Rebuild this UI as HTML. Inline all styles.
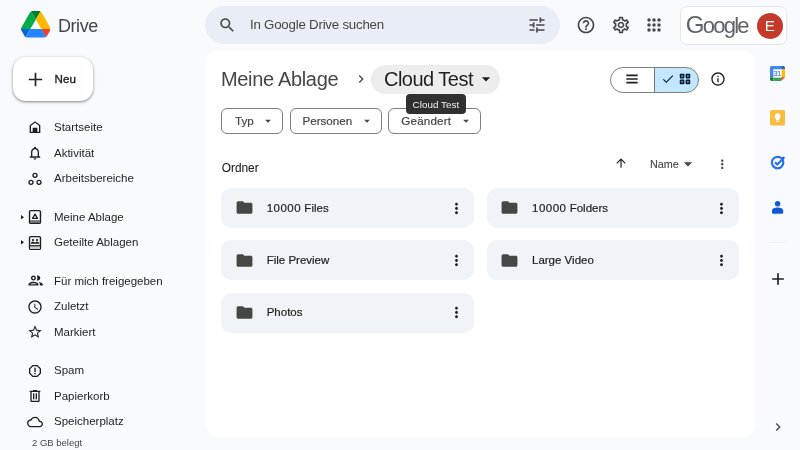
<!DOCTYPE html>
<html lang="de">
<head>
<meta charset="utf-8">
<title>Cloud Test – Google Drive</title>
<style>
*{box-sizing:border-box;margin:0;padding:0}
html,body{width:800px;height:450px;overflow:hidden}
body{background:#f8fafd;font-family:"Liberation Sans",sans-serif;color:#1f1f1f;position:relative;-webkit-font-smoothing:antialiased}
.abs{position:absolute}
svg{display:block}
.ico{position:absolute;width:16px;height:16px;fill:#444746}
.t{position:absolute;white-space:nowrap;line-height:1}
/* sidebar */
.nav{font-size:11.500px;color:#1f1f1f;left:54px}
.nico{left:27.200px;width:16px;height:16px;fill:#1f1f1f}
/* header */
#search{left:205px;top:6px;width:355px;height:38px;border-radius:19px;background:#e9eef6}
#acct{left:680px;top:6px;width:107px;height:38.600px;border-radius:7px;background:#fff;border:1px solid #e4e6e9}
#avatar{left:756.800px;top:12.600px;width:26px;height:26px;border-radius:50%;background:#c5392a;color:#fff;font-size:15px;text-align:center;line-height:26px}
/* main */
#main{left:205.500px;top:50px;width:549.800px;height:387px;border-radius:13px;background:#fff}
.chip{position:absolute;top:108px;height:25.700px;border:1px solid #7d807e;border-radius:6px;background:#fff}
.chip .t{top:6.200px;font-size:11.6px;color:#444746;-webkit-text-stroke:0.2px #444746}
.chip .ico{width:14px;height:14px;margin-left:1px}
.card{position:absolute;width:253px;height:39.800px;border-radius:10px;background:#f0f4f9}
.card .t{left:45.700px;top:14.500px;font-size:11.5px;color:#1f1f1f;-webkit-text-stroke:0.2px #1f1f1f}
.card .t span{letter-spacing:0.5px}
.card.r{width:251.800px}
.card.r .fold{left:13.400px}
.card.r .t{left:45px}
.card.r .more{left:225.900px}
.card .fold{left:13.700px;top:10.300px;width:19px;height:19px;fill:#444746}
.card .more{left:226.500px;top:11.700px;width:17px;height:17px;fill:#1f1f1f}
</style>
</head>
<body>
<div id="root" style="position:absolute;left:0;top:0;width:800px;height:450px;will-change:transform">

<!-- ===== logo ===== -->
<svg class="abs" style="left:20.500px;top:11.300px;width:29.600px;height:26.500px" viewBox="0 0 87.3 78">
<path d="m6.6 66.85 3.85 6.65c.8 1.4 1.95 2.5 3.3 3.3l13.750-23.800h-27.500c0 1.550.4 3.100 1.200 4.500z" fill="#0066da"/>
<path d="m43.650 25-13.750-23.800c-1.350.8-2.500 1.900-3.300 3.300l-25.400 44a9.060 9.060 0 0 0 -1.200 4.500h27.500z" fill="#00ac47"/>
<path d="m73.550 76.800c1.350-.8 2.500-1.900 3.300-3.300l1.600-2.750 7.650-13.250c.8-1.400 1.200-2.950 1.200-4.500h-27.502l5.852 11.500z" fill="#ea4335"/>
<path d="m43.650 25 13.750-23.800c-1.350-.8-2.900-1.200-4.500-1.200h-18.500c-1.600 0-3.150.45-4.500 1.200z" fill="#00832d"/>
<path d="m59.800 53h-32.300l-13.750 23.800c1.350.8 2.900 1.200 4.500 1.200h50.800c1.600 0 3.150-.45 4.500-1.200z" fill="#2684fc"/>
<path d="m73.400 26.500-12.700-22c-.8-1.400-1.950-2.500-3.300-3.300l-13.750 23.800 16.150 28h27.450c0-1.550-.4-3.100-1.200-4.500z" fill="#ffba00"/>
</svg>
<div class="t" style="left:58px;top:16.500px;font-size:18px;color:#444746;letter-spacing:-0.45px">Drive</div>

<!-- ===== new button ===== -->
<div class="abs" style="left:13px;top:57px;width:80px;height:44px;border-radius:13px;background:#fff;box-shadow:0 1px 2px rgba(0,0,0,.3),0 1px 3px 1px rgba(0,0,0,.15)"></div>
<svg class="ico" style="left:23.500px;top:67.750px;width:23px;height:23px;fill:#1f1f1f" viewBox="0 0 24 24"><path d="M19 12.850h-6.150V19h-1.700v-6.150H5v-1.700h6.150V5h1.700v6.150H19z"/></svg>
<div class="t" style="left:54.600px;top:73.300px;font-size:11.6px;color:#1f1f1f;-webkit-text-stroke:0.35px #1f1f1f">Neu</div>

<!-- ===== sidebar nav ===== -->
<!-- Startseite -->
<svg class="ico nico" style="top:119.3px" viewBox="0 0 24 24"><path d="M12 3.200L4 9.200V21h16V9.200l-8-6zM18 19h-2.500v-6h-7v6H6v-8.800l6-4.500 6 4.500V19z"/><rect x="9.500" y="14" width="5" height="5.500"/></svg>
<div class="t nav" style="top:121.9px">Startseite</div>
<!-- Aktivität -->
<svg class="ico nico" style="top:144.9px" viewBox="0 0 24 24"><path d="M12 22c1.100 0 2-.9 2-2h-4c0 1.100.9 2 2 2zm6-6v-5c0-3.070-1.630-5.640-4.500-6.320V4c0-.83-.67-1.500-1.500-1.500s-1.500.67-1.500 1.500v.68C7.640 5.360 6 7.920 6 11v5l-2 2v1h16v-1l-2-2zm-2 1H8v-6c0-2.480 1.510-4.500 4-4.500s4 2.020 4 4.500v6z"/></svg>
<div class="t nav" style="top:147.5px">Aktivität</div>
<!-- Arbeitsbereiche -->
<svg class="ico nico" style="top:170.5px" viewBox="0 0 24 24"><g fill="none" stroke="#1f1f1f" stroke-width="2"><circle cx="12" cy="6.500" r="3"/><circle cx="6" cy="17" r="3"/><circle cx="18" cy="17" r="3"/></g></svg>
<div class="t nav" style="top:173.1px">Arbeitsbereiche</div>
<!-- Meine Ablage -->
<svg class="abs" style="left:21px;top:214.800px;width:3px;height:4.400px" viewBox="0 0 4 6" preserveAspectRatio="none"><path d="M0 0l4 3-4 3z" fill="#1f1f1f"/></svg>
<svg class="ico nico" style="top:208.9px" viewBox="0 0 24 24"><rect x="3.800" y="2.400" width="16.400" height="19.200" rx="1.900" fill="none" stroke="#1f1f1f" stroke-width="2.100"/><rect x="4.600" y="16.800" width="14.800" height="4.200" fill="#707070"/><path d="M12 7.700L15.700 14H8.300Z" fill="none" stroke="#1f1f1f" stroke-width="2" stroke-linejoin="round"/></svg>
<div class="t nav" style="top:211.5px">Meine Ablage</div>
<!-- Geteilte Ablagen -->
<svg class="abs" style="left:21px;top:240.400px;width:3px;height:4.400px" viewBox="0 0 4 6" preserveAspectRatio="none"><path d="M0 0l4 3-4 3z" fill="#1f1f1f"/></svg>
<svg class="ico nico" style="top:234.5px" viewBox="0 0 24 24"><rect x="3.800" y="2.400" width="16.400" height="19.200" rx="1.900" fill="none" stroke="#1f1f1f" stroke-width="2.100"/><rect x="4.600" y="16.600" width="14.800" height="4.400" fill="#c9c9c9"/><rect x="3.800" y="15.200" width="16.400" height="1.800" fill="#1f1f1f"/><circle cx="9" cy="7.600" r="1.700"/><circle cx="15" cy="7.600" r="1.700"/><path d="M5.800 13.200v-.9c0-1.400 2-2.100 3.200-2.100 1 0 2.400.5 3 1.300.6-.8 2-1.300 3-1.300 1.200 0 3.200.7 3.200 2.100v.9H5.800z"/></svg>
<div class="t nav" style="top:237.1px">Geteilte Ablagen</div>
<!-- Für mich freigegeben -->
<svg class="ico nico" style="top:272.200px;left:26.700px;width:17.200px;height:17.200px" viewBox="0 0 24 24"><path d="M9 13.750c-2.340 0-7 1.170-7 3.500V19h14v-1.750c0-2.330-4.660-3.500-7-3.500zM4.340 17c.84-.58 2.870-1.250 4.660-1.250s3.820.67 4.660 1.250H4.340zM9 12c1.930 0 3.500-1.570 3.500-3.500S10.930 5 9 5 5.500 6.570 5.500 8.500 7.070 12 9 12zm0-5c.83 0 1.500.67 1.500 1.500S9.830 10 9 10s-1.500-.67-1.500-1.500S8.170 7 9 7zm7.040 6.810c1.160.84 1.960 1.960 1.960 3.440V19h4v-1.750c0-2.020-3.500-3.170-5.960-3.440zM15 12c1.930 0 3.500-1.570 3.500-3.500S16.930 5 15 5c-.54 0-1.040.13-1.500.35.630.89 1 1.980 1 3.150s-.37 2.260-1 3.150c.46.220.96.350 1.500.350z"/></svg>
<div class="t nav" style="top:275.5px">Für mich freigegeben</div>
<!-- Zuletzt -->
<svg class="ico nico" style="top:298.5px" viewBox="0 0 24 24"><path d="M11.990 2C6.470 2 2 6.480 2 12s4.470 10 9.990 10C17.520 22 22 17.520 22 12S17.520 2 11.990 2zM12 20c-4.420 0-8-3.580-8-8s3.580-8 8-8 8 3.580 8 8-3.580 8-8 8zm.5-13H11v6l5.250 3.150.75-1.230-4.500-2.670z"/></svg>
<div class="t nav" style="top:301.1px">Zuletzt</div>
<!-- Markiert -->
<svg class="ico nico" style="top:324.1px" viewBox="0 0 24 24"><path d="M22 9.240l-7.190-.62L12 2 9.190 8.630 2 9.240l5.460 4.730L5.820 21 12 17.270 18.180 21l-1.630-7.030L22 9.240zM12 15.400l-3.760 2.270 1-4.280-3.320-2.880 4.380-.38L12 6.100l1.710 4.040 4.380.38-3.320 2.880 1 4.280L12 15.400z"/></svg>
<div class="t nav" style="top:326.7px">Markiert</div>
<!-- Spam -->
<svg class="ico nico" style="top:362.5px" viewBox="0 0 24 24"><path d="M15.730 3H8.270L3 8.270v7.460L8.270 21h7.460L21 15.730V8.270L15.730 3zM19 14.900L14.900 19H9.100L5 14.900V9.100L9.100 5h5.800L19 9.100v5.800z"/><rect x="11" y="7" width="2" height="6.500"/><circle cx="12" cy="16" r="1.200"/></svg>
<div class="t nav" style="top:365.1px">Spam</div>
<!-- Papierkorb -->
<svg class="ico nico" style="top:388.1px" viewBox="0 0 24 24"><path d="M15 4V3H9v1H4v2h1v13c0 1.100.9 2 2 2h10c1.100 0 2-.9 2-2V6h1V4h-5zm2 15H7V6h10v13z"/><rect x="9" y="8" width="2" height="9"/><rect x="13" y="8" width="2" height="9"/></svg>
<div class="t nav" style="top:390.7px">Papierkorb</div>
<!-- Speicherplatz -->
<svg class="ico nico" style="top:413.7px" viewBox="0 0 24 24"><path d="M19.350 10.040C18.670 6.590 15.640 4 12 4 9.110 4 6.600 5.640 5.350 8.040 2.340 8.360 0 10.910 0 14c0 3.310 2.690 6 6 6h13c2.760 0 5-2.240 5-5 0-2.640-2.050-4.780-4.650-4.960zM19 18H6c-2.210 0-4-1.790-4-4 0-2.050 1.530-3.760 3.560-3.970l1.070-.11.5-.95C8.080 7.140 9.940 6 12 6c2.620 0 4.880 1.860 5.390 4.430l.3 1.500 1.530.11c1.560.1 2.780 1.410 2.780 2.960 0 1.650-1.350 3-3 3z"/></svg>
<div class="t nav" style="top:416.3px">Speicherplatz</div>
<div class="t" style="left:32px;top:438px;font-size:9.500px;color:#444746">2 GB belegt</div>

<!-- ===== header ===== -->
<div class="abs" id="search"></div>
<svg class="ico" style="left:218.200px;top:15.700px;width:18.500px;height:18.500px" viewBox="0 0 24 24"><path d="M15.5 14h-.79l-.28-.27C15.410 12.590 16 11.110 16 9.500 16 5.910 13.090 3 9.500 3S3 5.910 3 9.500 5.910 16 9.500 16c1.610 0 3.090-.590 4.230-1.570l.27.28v.79l5 4.990L20.490 19l-4.990-5zm-6 0C7.010 14 5 11.990 5 9.500S7.010 5 9.500 5 14 7.010 14 9.500 11.990 14 9.500 14z"/></svg>
<div class="t" style="left:250px;top:18.400px;font-size:13.300px;color:#444746;letter-spacing:-0.23px">In Google Drive suchen</div>
<svg class="ico" style="left:527px;top:15px;width:20px;height:20px" viewBox="0 0 24 24"><path d="M3 17v2h6v-2H3zM3 5v2h10V5H3zm10 16v-2h8v-2h-8v-2h-2v6h2zM7 9v2H3v2h4v2h2V9H7zm14 4v-2H11v2h10zm-6-4h2V7h4V5h-4V3h-2v6z"/></svg>
<svg class="ico" style="left:576px;top:15px;width:20px;height:20px" viewBox="0 0 24 24"><path d="M11 18h2v-2h-2v2zm1-16C6.480 2 2 6.480 2 12s4.480 10 10 10 10-4.480 10-10S17.520 2 12 2zm0 18c-4.410 0-8-3.590-8-8s3.590-8 8-8 8 3.590 8 8-3.590 8-8 8zm0-14c-2.210 0-4 1.790-4 4h2c0-1.100.9-2 2-2s2 .9 2 2c0 2-3 1.750-3 5h2c0-2.250 3-2.500 3-5 0-2.210-1.790-4-4-4z"/></svg>
<svg class="ico" style="left:611px;top:15px;width:20px;height:20px" viewBox="0 0 24 24"><path d="M19.430 12.980c.04-.32.07-.64.07-.98 0-.34-.03-.66-.07-.98l2.110-1.650c.19-.15.24-.42.12-.64l-2-3.460c-.09-.16-.26-.25-.44-.25-.06 0-.12.010-.17.030l-2.490 1c-.52-.4-1.080-.73-1.690-.98l-.38-2.650C14.460 2.180 14.250 2 14 2h-4c-.25 0-.46.18-.49.42l-.38 2.650c-.61.25-1.170.59-1.690.98l-2.490-1c-.06-.02-.12-.03-.18-.03-.17 0-.34.09-.43.25l-2 3.460c-.13.22-.07.49.12.64l2.110 1.650c-.04.32-.07.65-.07.98 0 .33.03.66.07.98l-2.110 1.650c-.19.15-.24.42-.12.64l2 3.460c.09.16.26.25.44.25.06 0 .12-.01.17-.03l2.490-1c.52.4 1.080.73 1.690.98l.38 2.650c.03.24.24.42.49.42h4c.25 0 .46-.18.49-.42l.38-2.650c.61-.25 1.170-.59 1.690-.98l2.490 1c.06.02.12.03.18.03.17 0 .34-.09.43-.25l2-3.460c.12-.22.07-.49-.12-.64l-2.110-1.650zm-1.980-1.710c.04.31.05.52.05.73 0 .21-.02.43-.05.73l-.14 1.130.89.7 1.080.84-.7 1.210-1.270-.51-1.040-.42-.9.68c-.43.32-.84.56-1.250.73l-1.060.43-.16 1.130-.2 1.350h-1.400l-.19-1.350-.16-1.130-1.060-.43c-.43-.18-.83-.41-1.230-.71l-.91-.7-1.060.43-1.270.51-.7-1.210 1.080-.84.89-.7-.14-1.130c-.03-.31-.05-.54-.05-.74s.02-.43.05-.73l.14-1.130-.89-.7-1.080-.84.7-1.210 1.270.51 1.040.42.9-.68c.43-.32.84-.56 1.250-.73l1.060-.43.16-1.130.2-1.350h1.390l.19 1.350.16 1.130 1.060.43c.43.18.83.41 1.230.71l.91.7 1.060-.43 1.270-.51.7 1.210-1.070.85-.89.7.14 1.130zM12 8c-2.210 0-4 1.790-4 4s1.790 4 4 4 4-1.790 4-4-1.790-4-4-4zm0 6c-1.100 0-2-.9-2-2s.9-2 2-2 2 .9 2 2-.9 2-2 2z"/></svg>
<svg class="ico" style="left:644px;top:15px;width:20px;height:20px" viewBox="0 0 24 24"><g><circle cx="6" cy="6" r="2.1"/><circle cx="12" cy="6" r="2.1"/><circle cx="18" cy="6" r="2.100"/><circle cx="6" cy="12" r="2.100"/><circle cx="12" cy="12" r="2.100"/><circle cx="18" cy="12" r="2.100"/><circle cx="6" cy="18" r="2.100"/><circle cx="12" cy="18" r="2.100"/><circle cx="18" cy="18" r="2.100"/></g></svg>
<div class="abs" id="acct"></div>
<div class="t" style="left:685.700px;top:12.400px;font-size:22px;line-height:26px;color:#5f6368;letter-spacing:-1.72px"><span style="font-size:24px">G</span>oogle</div>
<div class="abs" id="avatar">E</div>

<!-- ===== main panel ===== -->
<div class="abs" id="main"></div>
<!-- breadcrumb -->
<div class="t" style="left:221px;top:69px;font-size:20px;color:#444746;letter-spacing:-0.33px">Meine Ablage</div>
<svg class="ico" style="left:353px;top:71px;width:16px;height:16px" viewBox="0 0 24 24"><path d="M10 6L8.590 7.410 13.170 12l-4.580 4.590L10 18l6-6z"/></svg>
<div class="abs" style="left:371px;top:65px;width:129px;height:29px;border-radius:14.500px;background:#ededed"></div>
<div class="t" style="left:384px;top:69px;font-size:20px;color:#1f1f1f;letter-spacing:-0.52px">Cloud Test</div>
<svg class="ico" style="left:476px;top:69px;width:20px;height:20px;fill:#1f1f1f" viewBox="0 0 24 24"><path d="M7 10l5 5 5-5z"/></svg>
<!-- tooltip -->
<!-- view toggle -->
<div class="abs" style="left:610.300px;top:66.500px;width:88.400px;height:26.400px;border-radius:13.200px;border:1px solid #7d807e;background:linear-gradient(90deg,#fff 0,#fff 43.300px,#747775 43.300px,#747775 44.200px,#c2e7ff 44.200px);"></div>
<svg class="ico" style="left:624.300px;top:71.400px;width:16px;height:16px;fill:#1f1f1f" viewBox="0 0 24 24"><path d="M3.500 18.800h17v-2.500h-17v2.500zm0-5.550h17v-2.500h-17v2.500zm0-8.050v2.500h17V5.200h-17z"/></svg>
<svg class="ico" style="left:661.400px;top:72.400px;width:14px;height:14px;fill:#001d35" viewBox="0 0 24 24"><path d="M9 16.170L4.830 12l-1.420 1.410L9 19 21 7l-1.410-1.410z"/></svg>
<svg class="ico" style="left:678px;top:72.400px;width:14px;height:14px;fill:#001d35" viewBox="0 0 24 24"><g fill="none" stroke="#001d35" stroke-width="2.800" stroke-linejoin="round"><rect x="4.400" y="4.400" width="5.200" height="5.200"/><rect x="14.400" y="4.400" width="5.200" height="5.200"/><rect x="4.400" y="14.400" width="5.200" height="5.200"/><rect x="14.400" y="14.400" width="5.200" height="5.200"/></g></svg>
<svg class="ico" style="left:710px;top:71.400px;width:16px;height:16px;fill:#1f1f1f" viewBox="0 0 24 24"><path d="M11 7h2v2h-2zm0 4h2v6h-2zm1-9C6.480 2 2 6.480 2 12s4.480 10 10 10 10-4.480 10-10S17.520 2 12 2zm0 18c-4.410 0-8-3.590-8-8s3.590-8 8-8 8 3.590 8 8-3.590 8-8 8z"/></svg>
<!-- filter chips -->
<div class="chip" style="left:221px;width:62px"><div class="t" style="left:13px">Typ</div><svg class="ico" style="left:38px;top:5px" viewBox="0 0 24 24"><path d="M7 10l5 5 5-5z"/></svg></div>
<div class="chip" style="left:289.500px;width:92.500px"><div class="t" style="left:12px">Personen</div><svg class="ico" style="left:68.500px;top:5px" viewBox="0 0 24 24"><path d="M7 10l5 5 5-5z"/></svg></div>
<div class="chip" style="left:388px;width:93px"><div class="t" style="left:12.300px;letter-spacing:0.2px">Geändert</div><svg class="ico" style="left:69px;top:5px" viewBox="0 0 24 24"><path d="M7 10l5 5 5-5z"/></svg></div>
<div class="abs" style="left:406px;top:94.400px;width:59.800px;height:19.600px;border-radius:4px;background:#303030"></div>
<div class="t" style="left:412.600px;top:99.500px;font-size:9.800px;color:#f2f2f2;letter-spacing:0.05px">Cloud Test</div>
<!-- section header -->
<div class="t" style="left:221.700px;top:162.600px;font-size:11.900px;color:#1f1f1f;-webkit-text-stroke:0.1px #1f1f1f">Ordner</div>
<svg class="ico" style="left:614px;top:156.300px;width:14px;height:14px;fill:#1f1f1f" viewBox="0 0 24 24"><path d="M4 12l1.410 1.410L11 7.830V20h2V7.830l5.580 5.590L20 12l-8-8-8 8z"/></svg>
<div class="t" style="left:650px;top:159px;font-size:10.800px;color:#444746;-webkit-text-stroke:0.1px #444746">Name</div>
<svg class="ico" style="left:677.500px;top:153.600px;width:20px;height:20px" viewBox="0 0 24 24"><path d="M7 10l5 5 5-5z"/></svg>
<svg class="ico" style="left:715px;top:156.900px;width:14.500px;height:14.500px;fill:#444746" viewBox="0 0 24 24"><path d="M12 8c1.100 0 2-.9 2-2s-.9-2-2-2-2 .9-2 2 .9 2 2 2zm0 2c-1.100 0-2 .9-2 2s.9 2 2 2 2-.9 2-2-.9-2-2-2zm0 6c-1.100 0-2 .9-2 2s.9 2 2 2 2-.9 2-2-.9-2-2-2z"/></svg>
<!-- folder cards -->
<div class="card" style="left:221px;top:188px"><svg class="ico fold" viewBox="0 0 24 24"><path d="M10 4H4c-1.100 0-1.990.9-1.990 2L2 18c0 1.100.9 2 2 2h16c1.100 0 2-.9 2-2V8c0-1.100-.9-2-2-2h-8l-2-2z"/></svg><div class="t"><span>10000</span> Files</div><svg class="ico more" viewBox="0 0 24 24"><path d="M12 8c1.100 0 2-.9 2-2s-.9-2-2-2-2 .9-2 2 .9 2 2 2zm0 2c-1.100 0-2 .9-2 2s.9 2 2 2 2-.9 2-2-.9-2-2-2zm0 6c-1.100 0-2 .9-2 2s.9 2 2 2 2-.9 2-2-.9-2-2-2z"/></svg></div>
<div class="card r" style="left:487px;top:188px"><svg class="ico fold" viewBox="0 0 24 24"><path d="M10 4H4c-1.100 0-1.990.9-1.990 2L2 18c0 1.100.9 2 2 2h16c1.100 0 2-.9 2-2V8c0-1.100-.9-2-2-2h-8l-2-2z"/></svg><div class="t"><span>10000</span> Folders</div><svg class="ico more" viewBox="0 0 24 24"><path d="M12 8c1.100 0 2-.9 2-2s-.9-2-2-2-2 .9-2 2 .9 2 2 2zm0 2c-1.100 0-2 .9-2 2s.9 2 2 2 2-.9 2-2-.9-2-2-2zm0 6c-1.100 0-2 .9-2 2s.9 2 2 2 2-.9 2-2-.9-2-2-2z"/></svg></div>
<div class="card" style="left:221px;top:240.400px"><svg class="ico fold" viewBox="0 0 24 24"><path d="M10 4H4c-1.100 0-1.990.9-1.990 2L2 18c0 1.100.9 2 2 2h16c1.100 0 2-.9 2-2V8c0-1.100-.9-2-2-2h-8l-2-2z"/></svg><div class="t">File Preview</div><svg class="ico more" viewBox="0 0 24 24"><path d="M12 8c1.100 0 2-.9 2-2s-.9-2-2-2-2 .9-2 2 .9 2 2 2zm0 2c-1.100 0-2 .9-2 2s.9 2 2 2 2-.9 2-2-.9-2-2-2zm0 6c-1.100 0-2 .9-2 2s.9 2 2 2 2-.9 2-2-.9-2-2-2z"/></svg></div>
<div class="card r" style="left:487px;top:240.400px"><svg class="ico fold" viewBox="0 0 24 24"><path d="M10 4H4c-1.100 0-1.990.9-1.990 2L2 18c0 1.100.9 2 2 2h16c1.100 0 2-.9 2-2V8c0-1.100-.9-2-2-2h-8l-2-2z"/></svg><div class="t">Large Video</div><svg class="ico more" viewBox="0 0 24 24"><path d="M12 8c1.100 0 2-.9 2-2s-.9-2-2-2-2 .9-2 2 .9 2 2 2zm0 2c-1.100 0-2 .9-2 2s.9 2 2 2 2-.9 2-2-.9-2-2-2zm0 6c-1.100 0-2 .9-2 2s.9 2 2 2 2-.9 2-2-.9-2-2-2z"/></svg></div>
<div class="card" style="left:221px;top:292.800px"><svg class="ico fold" viewBox="0 0 24 24"><path d="M10 4H4c-1.100 0-1.990.9-1.990 2L2 18c0 1.100.9 2 2 2h16c1.100 0 2-.9 2-2V8c0-1.100-.9-2-2-2h-8l-2-2z"/></svg><div class="t">Photos</div><svg class="ico more" viewBox="0 0 24 24"><path d="M12 8c1.100 0 2-.9 2-2s-.9-2-2-2-2 .9-2 2 .9 2 2 2zm0 2c-1.100 0-2 .9-2 2s.9 2 2 2 2-.9 2-2-.9-2-2-2zm0 6c-1.100 0-2 .9-2 2s.9 2 2 2 2-.9 2-2-.9-2-2-2z"/></svg></div>
<!-- ===== right side panel ===== -->
<svg class="abs" style="left:770px;top:65.600px;width:15px;height:15px" viewBox="0 0 18 18">
<rect x="1" y="1" width="16" height="16" rx="2" fill="#fff"/>
<path d="M13.400 0H2a2 2 0 0 0-2 2v11.400h4V4h9.400z" fill="#4285f4"/>
<path d="M13.400 0H16a2 2 0 0 1 2 2v2h-4.600z" fill="#1967d2"/>
<path d="M14 4h4v9.400h-4z" fill="#fbbc04"/>
<path d="M0 13.400V16a2 2 0 0 0 2 2h2v-4.600z" fill="#188038"/>
<path d="M4 14h9.400v4H4z" fill="#34a853"/>
<path d="M13.400 18l4.600-4.600h-4.600z" fill="#ea4335"/>
<text x="8.800" y="12.300" font-family="Liberation Sans, sans-serif" font-size="8.800" font-weight="400" fill="#4285f4" stroke="#4285f4" stroke-width="0.25" text-anchor="middle" letter-spacing="-0.4">31</text>
</svg>
<svg class="abs" style="left:770px;top:110px;width:15.200px;height:15.500px" viewBox="0 0 16 16" preserveAspectRatio="none">
<rect x="0" y="0" width="16" height="16" rx="1.800" fill="#fabc3f"/>
<path d="M8 3.400a3.100 3.100 0 0 0-1.700 5.700V10.200h3.400V9.100A3.100 3.100 0 0 0 8 3.400z" fill="#fff"/><rect x="6.300" y="11" width="3.400" height="1.200" fill="#fff"/>
</svg>
<svg class="abs" style="left:769px;top:154px;width:18px;height:18px" viewBox="0 0 18 18">
<circle cx="8.600" cy="8.600" r="5.700" fill="none" stroke="#2772ea" stroke-width="2.200"/>
<path d="M6 8.300l2.300 2.300 6.600-6.900" fill="none" stroke="#2772ea" stroke-width="2.100"/>
<path d="M12.600 3.600l2.400-1.200.8.800-1.200 2.400z" fill="#1a5fd0"/>
</svg>
<svg class="abs" style="left:769px;top:199px;width:16px;height:16px" viewBox="0 0 16 16">
<circle cx="8.600" cy="4.700" r="2.750" fill="#1258d0"/>
<path d="M3 13.600v-2.100C3 9.400 5.600 8.500 8.600 8.500s5.600.9 5.600 3v2.100a1.200 1.200 0 0 1-1.200 1.200H4.200A1.200 1.200 0 0 1 3 13.600z" fill="#1258d0"/>
</svg>
<div class="abs" style="left:769.500px;top:242.300px;width:16px;height:1px;background:#edf0f4"></div>
<svg class="ico" style="left:767.600px;top:268.600px;width:20px;height:20px;fill:#1f1f1f" viewBox="0 0 24 24"><path d="M19 13h-6v6h-2v-6H5v-2h6V5h2v6h6v2z"/></svg>
<svg class="ico" style="left:769.600px;top:419.200px;width:16px;height:16px" viewBox="0 0 24 24"><path d="M10 6L8.590 7.410 13.170 12l-4.580 4.590L10 18l6-6z"/></svg>

</div>
</body>
</html>
